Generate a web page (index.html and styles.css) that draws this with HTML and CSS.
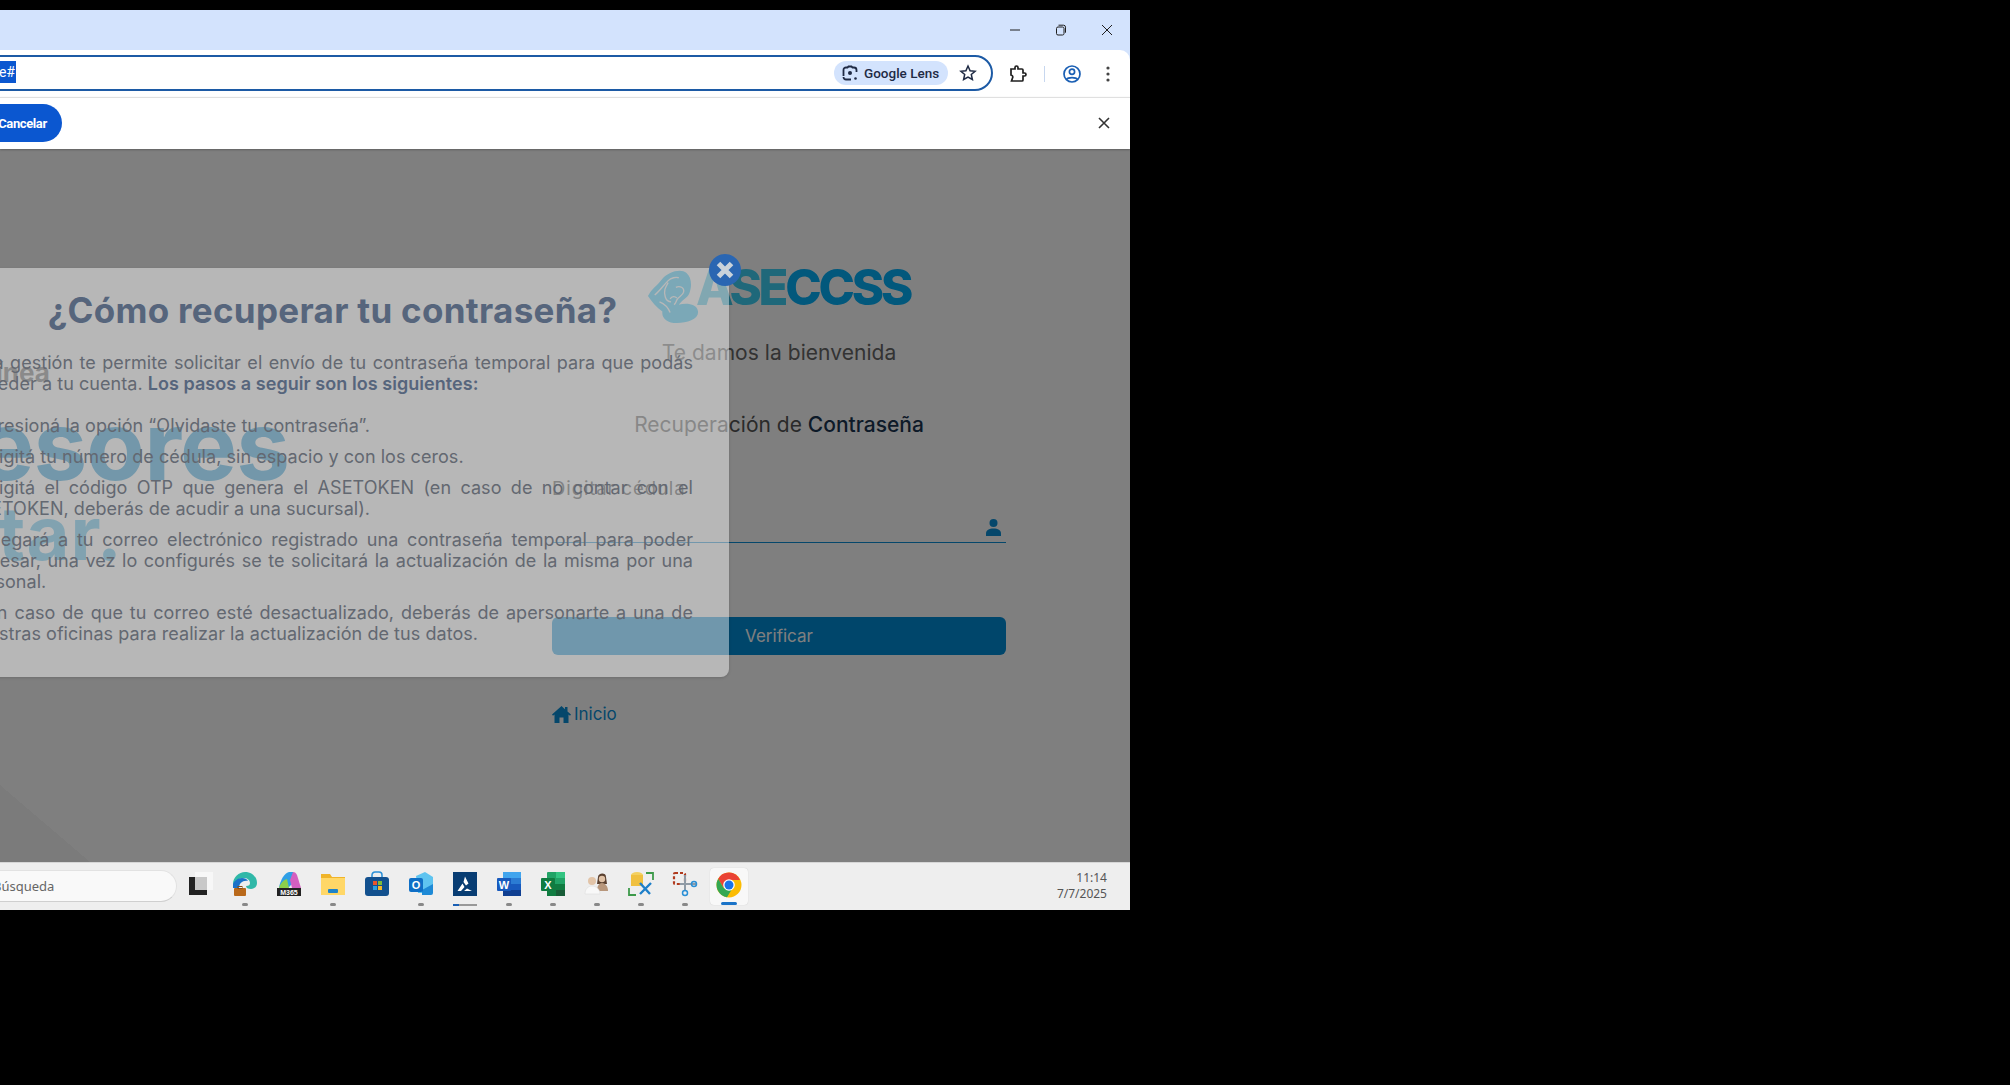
FILE: index.html
```html
<!DOCTYPE html>
<html lang="es">
<head>
  <meta charset="UTF-8">
  <title>Recuperación de Contraseña</title>
  <link rel="stylesheet" href="styles.css">
</head>
<body>
  <div class="screen">
    <div class="titlebar">
      <button class="win-btn"><svg width="12" height="12" viewBox="0 0 12 12"><path d="M1 6h10" stroke="#1f1f1f" stroke-width="1"/></svg></button>
      <button class="win-btn"><svg width="12" height="12" viewBox="0 0 12 12" fill="none" stroke="#1f1f1f"><rect x="1.5" y="3" width="7.5" height="8" rx="1.5"/><path d="M3.5 1.2h5a2 2 0 0 1 2 2v5.5"/></svg></button>
      <button class="win-btn"><svg width="12" height="12" viewBox="0 0 12 12"><path d="M1 1l10 10M11 1L1 11" stroke="#1f1f1f" stroke-width="1"/></svg></button>
    </div>

    <div class="toolbar">
      <div class="omnibox">
        <div class="url"><span class="url-sel">se#</span></div>
        <div class="lens">
          <svg width="16" height="16" viewBox="0 0 16 16" fill="none" stroke="#1f2a44" stroke-width="1.8"><path d="M1.5 11V5a2.5 2.5 0 0 1 2.5-2.5h1.5l1-1h3l1 1H12A2.5 2.5 0 0 1 14.500 5v2M9 14.500H4A2.500 2.500 0 0 1 1.500 12"/><circle cx="8" cy="8" r="2" fill="#1f2a44" stroke="none"/><circle cx="13.500" cy="13.500" r="1.300" fill="#1f2a44" stroke="none"/></svg>
          <span>Google Lens</span>
        </div>
        <svg class="star" width="18" height="18" viewBox="0 0 18 18" fill="none" stroke="#1f2a44" stroke-width="1.500"><path d="M9 2l2.100 4.700 5 .5-3.800 3.300 1.100 5L9 13l-4.400 2.500 1.100-5L1.900 7.200l5-.5z"/></svg>
      </div>
      <div class="tool-icons">
        <svg width="20" height="20" viewBox="0 0 20 20" fill="none" stroke="#1f1f1f" stroke-width="1.700"><path d="M3 5h4V3.500a1.500 1.500 0 0 1 3 0V5h4a1 1 0 0 1 1 1v3h1.500a1.500 1.500 0 0 1 0 3H15v4a1 1 0 0 1-1 1H3.500l1-3a2 2 0 0 0-1.500-3z"/></svg>
        <span class="tool-sep"></span>
        <svg width="20" height="20" viewBox="0 0 20 20" fill="none" stroke="#1a5fb4" stroke-width="1.700"><circle cx="10" cy="10" r="8"/><circle cx="10" cy="7.800" r="2.600"/><path d="M4.500 15.500c1.500-2.600 9.500-2.600 11 0"/></svg>
        <svg class="kebab" width="4" height="16" viewBox="0 0 4 16" fill="#444"><circle cx="2" cy="2" r="1.600"/><circle cx="2" cy="8" r="1.600"/><circle cx="2" cy="14" r="1.600"/></svg>
      </div>
    </div>

    <div class="infobar">
      <button class="cancel-btn">Cancelar</button>
      <svg class="info-close" width="12" height="12" viewBox="0 0 12 12"><path d="M1 1l10 10M11 1L1 11" stroke="#333" stroke-width="1.600"/></svg>
    </div>

    <div class="content">
      <div class="page">
        <div class="hero">
          <div class="hero-small">Línea</div>
          <div class="hero-big">Asesores</div>
          <div class="hero-big hero-light">tar.</div>
        </div>

        <div class="form">
          <div class="logo">
            <svg class="logo-mark" width="52" height="54" viewBox="0 0 54 56">
              <path d="M1 27C5 19 11 16 16 9c6-7 19-11 25-6 5 4 6 13 3 21-2 5-8 7-11 12 8-2 19-1 20 7 1 8-11 12-22 12C21 55 15 50 16 43 10 39 5 33 1 27z" fill="#28c8ff"/>
              <path d="M8 26c5-4 9-10 14-15 3-3 8-4 11-3M13 33c5 2 9 6 11 11M22 13c-3 5-5 9-3 15 1 3 3 5 6 5M30 18c4-2 9 0 8 5-1 4-5 4-7 8-1 2-1 4-3 5M24 30c2-3 5-3 7-1" fill="none" stroke="#fff" stroke-width="1.400"/>
            </svg>
            <span class="logo-text"><span class="logo-a">A</span><span class="logo-se">SE</span>CCSS</span>
          </div>
          <p class="welcome">Te damos la bienvenida</p>
          <h2 class="form-title">Recuperación de <strong>Contraseña</strong></h2>
          <div class="field">
            <label class="field-label">Digitar cédula</label>
            <div class="field-input">
              <svg width="15" height="17" viewBox="0 0 15 17" fill="#0a8fd6"><circle cx="7.500" cy="4" r="4"/><path d="M0 17v-2.500C0 11 3 9.500 7.500 9.500S15 11 15 14.500V17z"/></svg>
            </div>
          </div>
          <button class="verify-btn">Verificar</button>
          <a class="home-link" href="#">
            <svg width="19" height="17" viewBox="0 0 19 17" fill="#0a8fd6"><path d="M9.500 0L0 8.500l1 1.200 1.500-1.300V17h5v-5.500h4V17h5V8.400L18 9.700l1-1.200L15.500 5.400V1h-2.500v2.200z"/></svg>
            <span>Inicio</span>
          </a>
        </div>
      </div>

      <div class="backdrop"></div>

      <div class="modal">
        <h1 class="modal-title">¿Cómo recuperar tu contraseña?</h1>
        <p class="modal-intro">Esta gestión te permite solicitar el envío de tu contraseña temporal para que podás acceder a tu cuenta. <strong>Los pasos a seguir son los siguientes:</strong></p>
        <ul class="steps">
          <li>Presioná la opción “Olvidaste tu contraseña”.</li>
          <li>Digitá tu número de cédula, sin espacio y con los ceros.</li>
          <li>Digitá el código OTP que genera el ASETOKEN (en caso de no contar con el ASETOKEN, deberás de acudir a una sucursal).</li>
          <li>Llegará a tu correo electrónico registrado una contraseña temporal para poder ingresar, una vez lo configurés se te solicitará la actualización de la misma por una personal.</li>
          <li>En caso de que tu correo esté desactualizado, deberás de apersonarte a una de nuestras oficinas para realizar la actualización de tus datos.</li>
        </ul>
      </div>
      <svg class="modal-close" width="32" height="32" viewBox="0 0 32 32"><circle cx="16" cy="16" r="16" fill="#2a66b2"/><path d="M9.500 9.500l13 13M22.500 9.500l-13 13" stroke="#c9d2da" stroke-width="5"/></svg>
    </div>

    <div class="taskbar">
      <div class="search">Búsqueda</div>
      <div class="task task-view">
        <svg width="26" height="24" viewBox="0 0 26 24"><rect x="7" y="0" width="18" height="18" fill="#f7f7f7"/><rect x="1" y="5" width="18" height="18" fill="#222"/><rect x="7" y="5" width="12" height="13" fill="#c8c8c8"/></svg>
      </div>
      <div class="task run">
        <svg width="26" height="26" viewBox="0 0 26 26"><path d="M1 13C1 6 7 1 13 1c7 0 12 5 12 11 0 4-3 6-6 6-3 0-5-1-5-3 3 0 4-1 4-3 0-3-3-5-6-5-5 0-9 3-10 6z" fill="#30b8a8"/><path d="M1 13c1-3 5-6 9-6 3 0 5 1 6 3-5-1-9 2-9 7H1z" fill="#1a72c9"/><rect x="2" y="17" width="12" height="8" rx="1" fill="#b9691a"/><rect x="6" y="15.500" width="4" height="2" fill="none" stroke="#8a4d12"/></svg>
      </div>
      <div class="task">
        <svg width="26" height="26" viewBox="0 0 26 26"><path d="M3 17C4 10 8 2 13 1h4l3 8-8 8z" fill="#2f9fe6"/><path d="M17 1c2 0 3 1 4 3l4 13h-9l-2-8z" fill="#d45fc0"/><path d="M3 17c1-4 4-8 8-9l2 9z" fill="#8bcf4a"/><rect x="1" y="17" width="24" height="8" fill="#222"/><text x="13" y="24" class="m365">M365</text></svg>
      </div>
      <div class="task run">
        <svg width="26" height="26" viewBox="0 0 26 26"><path d="M1 3h9l2 3h13v18H1z" fill="#f0b429"/><rect x="1" y="7" width="24" height="17" fill="#ffd767"/><rect x="8" y="18" width="10" height="4" rx="1" fill="#1e83c9"/></svg>
      </div>
      <div class="task">
        <svg width="26" height="26" viewBox="0 0 26 26"><path d="M8 7V4a3 3 0 0 1 3-3h4a3 3 0 0 1 3 3v3" fill="none" stroke="#2a8fd6" stroke-width="1.500"/><rect x="1" y="6" width="24" height="19" rx="3" fill="#12508e"/><rect x="9" y="10" width="4" height="4" fill="#e8552b"/><rect x="14" y="10" width="4" height="4" fill="#7cbb3a"/><rect x="9" y="15" width="4" height="4" fill="#2a9fe0"/><rect x="14" y="15" width="4" height="4" fill="#f5b829"/></svg>
      </div>
      <div class="task run">
        <svg width="26" height="26" viewBox="0 0 26 26"><path d="M8 5l9-4 8 5v14a2 2 0 0 1-2 2H10z" fill="#5fc4f0"/><path d="M14 24h9a2 2 0 0 0 2-2v-9l-11 6z" fill="#1e8ad6"/><rect x="1" y="7" width="14" height="14" rx="2" fill="#0f6fc6"/><text x="8" y="18" class="app-letter">O</text></svg>
      </div>
      <div class="task run-bar">
        <svg width="24" height="24" viewBox="0 0 24 24"><rect width="24" height="24" fill="#083d73"/><path d="M12 4.500l3.500 7-2.500 2-2.500-3.500zM9.500 11.500l2 3.500-3.500 4H4.500zM14 16.500l5 2.500h-8z" fill="#fff"/></svg>
      </div>
      <div class="task run">
        <svg width="26" height="26" viewBox="0 0 26 26"><rect x="7" y="1" width="18" height="24" rx="1" fill="#2b7cd3"/><rect x="7" y="1" width="18" height="6" fill="#41a5ee"/><rect x="7" y="13" width="18" height="6" fill="#185abd"/><rect x="7" y="19" width="18" height="6" fill="#103f91"/><rect x="1" y="7" width="14" height="13" rx="1" fill="#185abd"/><text x="8" y="17.500" class="app-letter">W</text></svg>
      </div>
      <div class="task run">
        <svg width="26" height="26" viewBox="0 0 26 26"><rect x="7" y="1" width="18" height="24" rx="1" fill="#21a366"/><rect x="16" y="1" width="9" height="6" fill="#33c481"/><rect x="7" y="13" width="9" height="12" fill="#107c41"/><rect x="16" y="13" width="9" height="6" fill="#107c41"/><rect x="16" y="19" width="9" height="6" fill="#185c37"/><rect x="1" y="7" width="14" height="13" rx="1" fill="#107c41"/><text x="8" y="17.500" class="app-letter">X</text></svg>
      </div>
      <div class="task run">
        <svg width="26" height="26" viewBox="0 0 26 26"><path d="M14 6c0-4 8-5 8 0l1 7h-10z" fill="#5a4030"/><circle cx="18" cy="8" r="3.200" fill="#e0c2a6"/><path d="M13 20c0-5 2-8 5-8s6 3 6 8z" fill="#b8977c"/><circle cx="8" cy="10" r="4" fill="#e2c4a8"/><path d="M1 23c0-5 3-8 7-8s8 3 8 8z" fill="#f8f8f8" stroke="#ddd" stroke-width=".6"/></svg>
      </div>
      <div class="task run">
        <svg width="26" height="26" viewBox="0 0 26 26"><ellipse cx="9" cy="4" rx="6" ry="3" fill="#f4d060"/><path d="M3 4v11h12V4z" fill="#f0c040"/><path d="M1 17v7h7M25 9V2h-7" fill="none" stroke="#3d9a4a" stroke-width="1.800"/><path d="M12 12l10 11M23 12L12 23" stroke="#1d7fc9" stroke-width="2.400"/></svg>
      </div>
      <div class="task run">
        <svg width="26" height="26" viewBox="0 0 26 26"><rect x="2" y="2" width="11" height="11" rx="1" fill="none" stroke="#b03a1e" stroke-width="2.200" stroke-dasharray="3 2"/><path d="M13 4v16M8 13h16" stroke="#8f9aa5" stroke-width="2"/><circle cx="13" cy="22" r="2.500" fill="none" stroke="#2a8fd6" stroke-width="1.500"/><circle cx="22" cy="13" r="2.500" fill="none" stroke="#2a8fd6" stroke-width="1.500"/></svg>
      </div>
      <div class="task active">
        <svg width="26" height="26" viewBox="0 0 26 26"><circle cx="13" cy="13" r="12.500" fill="#fbbc04"/><path d="M13 .5A12.500 12.500 0 0 0 2.200 6.750L7.600 16 13 8h11a12.500 12.500 0 0 0-11-7.500z" fill="#ea4335"/><path d="M2.200 6.750A12.500 12.500 0 0 0 11 25.340L16.600 16 7.600 16z" fill="#34a853"/><circle cx="13" cy="13" r="5.800" fill="#fff"/><circle cx="13" cy="13" r="4.500" fill="#1a73e8"/></svg>
      </div>
      <div class="clock">
        <div>11:14</div>
        <div>7/7/2025</div>
      </div>
    </div>
  </div>
</body>
</html>
```

FILE: styles.css
```css
* {
  box-sizing: border-box;
}
html, body {
  height: 100%;
}
body {
  margin: 0;
  padding-top: 10px;
  background: #000;
  font-family: Inter, "Liberation Sans", sans-serif;
  overflow: hidden;
}
button {
  font-family: inherit;
  border: none;
  padding: 0;
}
.screen {
  width: 1130px;
  height: 900px;
  display: flex;
  flex-direction: column;
  overflow: hidden;
  background: #d3e3fd;
}

/* browser chrome */
.titlebar {
  height: 40px;
  display: flex;
  justify-content: flex-end;
}
.win-btn {
  width: 46px;
  height: 40px;
  background: none;
  display: flex;
  align-items: center;
  justify-content: center;
}
.toolbar {
  height: 47px;
  background: #fff;
  border-top-right-radius: 10px;
  display: flex;
  align-items: center;
}
.omnibox {
  width: 1013px;
  height: 36px;
  margin-left: -20px;
  margin-top: -1px;
  border: 2px solid #1c5aa5;
  border-radius: 18px;
  display: flex;
  align-items: center;
  font-family: Roboto, sans-serif;
}
.url {
  flex: 1;
  font-size: 14px;
}
.url-sel {
  display: inline-block;
  width: 34px;
  height: 22px;
  line-height: 22px;
  padding-right: 1px;
  text-align: right;
  background: #0b57d0;
  color: #fff;
  white-space: nowrap;
  overflow: hidden;
}
.lens {
  width: 114px;
  height: 24px;
  border-radius: 12px;
  background: #d3e3fd;
  display: flex;
  align-items: center;
  gap: 6px;
  padding-left: 8px;
  font-size: 13.500px;
  font-weight: 500;
  color: #1f2a44;
}
.star {
  margin: 0 14px 0 11px;
}
.tool-icons {
  flex: 1;
  display: flex;
  align-items: center;
  padding-left: 15px;
}
.tool-sep {
  width: 1px;
  height: 16px;
  background: #c7d7ef;
  margin: 0 17px 0 16px;
}
.kebab {
  margin-left: 24px;
}
.infobar {
  height: 52px;
  background: #fff;
  border-top: 1px solid #e0e0e0;
  display: flex;
  align-items: center;
  justify-content: space-between;
  padding-right: 20px;
  position: relative;
  z-index: 1;
  box-shadow: 0 1px 2px rgba(0, 0, 0, .25);
}
.cancel-btn {
  width: 100px;
  height: 38px;
  margin-left: -38px;
  margin-top: -1px;
  padding-left: 21px;
  border-radius: 19px;
  background: #0b57d0;
  color: #fff;
  font-family: Roboto, sans-serif;
  font-size: 13px;
  font-weight: 700;
  letter-spacing: -.4px;
  text-align: center;
}
.info-close {
  margin-top: -1px;
}

/* page under the dialog */
.content {
  flex: 1;
  position: relative;
  background: linear-gradient(to top right, #f6f6f6 50%, transparent 50%) no-repeat left bottom / 90px 77px, #fff;
  overflow: hidden;
}
.page {
  display: flex;
}
.hero {
  width: 697px;
  margin-left: -145px;
  flex-shrink: 0;
  padding-top: 208px;
}
.hero-small {
  height: 48px;
  padding-left: 126px;
  font-size: 26px;
  font-weight: 700;
  color: #5e5e5e;
}
.hero-big {
  height: 80px;
  line-height: 80px;
  font-size: 96px;
  font-weight: 700;
  letter-spacing: -1px;
  color: #0f8fd0;
}
.hero-light {
  margin-top: 8px;
  padding-left: 143px;
  font-size: 74px;
  letter-spacing: 1px;
  color: #3fb4e6;
}
.form {
  width: 454px;
  flex-shrink: 0;
  padding-top: 116px;
}
.logo {
  height: 62px;
  display: flex;
  align-items: flex-start;
  padding-left: 95px;
}
.logo-mark {
  flex-shrink: 0;
  margin-top: 5px;
}
.logo-text {
  font-size: 49px;
  line-height: 46px;
  margin-left: -3px;
  font-weight: 800;
  letter-spacing: -3.200px;
  color: #04b0f8;
}
.logo-a {
  color: #3ec6e8;
}
.logo-se {
  color: #3ed0f5;
}
.welcome {
  margin: 11px 0 0;
  height: 30px;
  line-height: 30px;
  font-size: 21px;
  letter-spacing: .05px;
  text-align: center;
  color: #666;
}
.form-title {
  margin: 42px 0 0;
  height: 30px;
  line-height: 30px;
  font-size: 21px;
  font-weight: 400;
  text-align: center;
  color: #555;
}
.form-title strong {
  font-weight: 500;
  color: #1a3550;
}
.field {
  margin-top: 38px;
}
.field-label {
  display: block;
  height: 20px;
  line-height: 20px;
  font-size: 18.500px;
  letter-spacing: .9px;
  color: #444;
}
.field-input {
  height: 45px;
  border-bottom: 1px solid #0a8fd6;
  display: flex;
  justify-content: flex-end;
  align-items: flex-end;
  padding: 0 5px 6px 0;
}
.verify-btn {
  display: block;
  width: 100%;
  height: 38px;
  margin-top: 74px;
  border-radius: 6px;
  background: #008cd6;
  color: #fff;
  font-size: 17px;
}
.home-link {
  display: flex;
  align-items: center;
  gap: 3px;
  height: 24px;
  margin-top: 47px;
  font-size: 17px;
  color: #0a8fd6;
  text-decoration: none;
}

/* dialog over the page */
.backdrop {
  position: absolute;
  inset: 0;
  background: rgba(0, 0, 0, .5);
}
.modal {
  position: absolute;
  left: -65px;
  top: 119px;
  width: 794px;
  height: 409px;
  padding: 20px 36px 0 37px;
  border-radius: 8px;
  background: rgba(255, 255, 255, .44);
  box-shadow: 0 1px 3px rgba(0, 0, 0, .15);
}
.modal-title {
  margin: 0;
  height: 44px;
  line-height: 44px;
  font-size: 35px;
  font-weight: 700;
  letter-spacing: .3px;
  text-align: center;
  color: #56657c;
}
.modal-intro {
  margin: 20px 0 0 -5px;
  font-size: 18px;
  line-height: 21px;
  letter-spacing: .05px;
  text-align: justify;
  color: #636871;
}
.modal-intro strong {
  font-weight: 600;
  color: #56657c;
}
.steps {
  list-style: none;
  margin: 21px 0 0 -5px;
  padding: 0;
  font-size: 18px;
  line-height: 21px;
  letter-spacing: .05px;
  text-align: justify;
  color: #636871;
}
.steps li {
  margin-bottom: 10px;
  text-indent: 19px;
}
.modal-close {
  position: absolute;
  left: 709px;
  top: 105px;
}

/* windows taskbar */
.taskbar {
  height: 48px;
  background: #eee;
  border-top: 1px solid #d6d6d6;
  display: flex;
  align-items: center;
  position: relative;
}
.search {
  width: 237px;
  height: 32px;
  margin-left: -60px;
  margin-top: -1px;
  padding-left: 52px;
  border-radius: 16px;
  background: #f9f9f9;
  border: 1px solid #e2e2e2;
  border-bottom-color: #cfcfcf;
  font-family: "Noto Sans", sans-serif;
  font-size: 13px;
  line-height: 30px;
  color: #666;
}
.task {
  width: 44px;
  height: 47px;
  flex-shrink: 0;
  display: flex;
  align-items: center;
  justify-content: center;
  padding-bottom: 5px;
  position: relative;
}
.task-view {
  margin-right: 2px;
  padding-left: 4px;
}
.run::after {
  content: "";
  position: absolute;
  left: 19px;
  bottom: 4px;
  width: 6px;
  height: 3px;
  border-radius: 2px;
  background: #888;
}
.run-bar::after {
  content: "";
  position: absolute;
  left: 10px;
  bottom: 4px;
  width: 24px;
  height: 2px;
  background: linear-gradient(90deg, #1a5fb4 25%, #999 25%);
}
.active {
  width: 38px;
  height: 37px;
  margin-left: 3px;
  margin-top: -1px;
  padding-bottom: 2px;
  border-radius: 4px;
  background: #f8f8f8;
  box-shadow: 0 0 1px rgba(0, 0, 0, .2);
}
.active::after {
  content: "";
  position: absolute;
  left: 11px;
  bottom: 0;
  width: 16px;
  height: 3px;
  border-radius: 2px;
  background: #1a73c8;
}
.m365 {
  font-family: "Liberation Sans", sans-serif;
  font-size: 7px;
  font-weight: 700;
  fill: #fff;
  text-anchor: middle;
}
.app-letter {
  font-family: "Liberation Sans", sans-serif;
  font-size: 11px;
  font-weight: 700;
  fill: #fff;
  text-anchor: middle;
}
.clock {
  margin-left: auto;
  padding: 0 23px 2px 0;
  text-align: right;
  font-family: "Noto Sans", sans-serif;
  font-size: 12px;
  line-height: 16px;
  color: #555;
}
```
